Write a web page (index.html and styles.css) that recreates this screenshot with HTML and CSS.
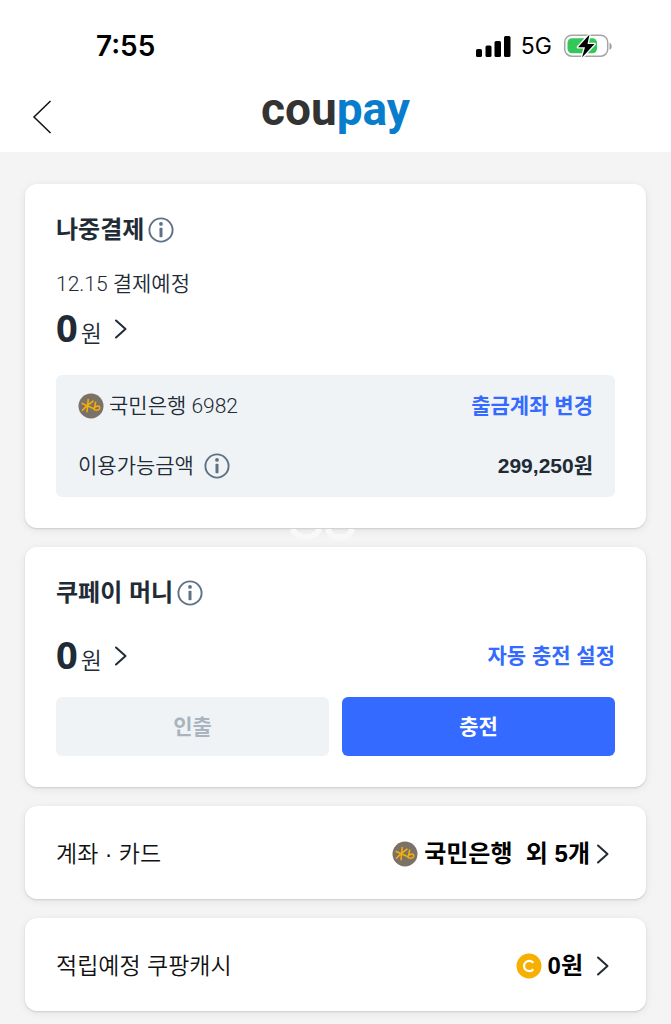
FILE: index.html
```html
<!DOCTYPE html>
<html lang="ko">
<head>
<meta charset="utf-8">
<meta name="viewport" content="width=device-width, initial-scale=1">
<title>coupay</title>
<link rel="stylesheet" href="styles.css">
</head>
<body>
<svg class="defs" aria-hidden="true">
  <symbol id="info" viewBox="0 0 26 26">
    <circle cx="13" cy="13" r="11.6" fill="none" stroke="#5f7285" stroke-width="1.9"/>
    <circle cx="13" cy="6.9" r="1.9" fill="#5f7285"/>
    <rect x="11.5" y="10.8" width="3" height="9.4" rx="0.8" fill="#5f7285"/>
  </symbol>
  <symbol id="chevron" viewBox="0 0 14 22">
    <path d="M2 2.5 11.5 11 2 19.5" fill="none" stroke="#212b36" stroke-width="2" stroke-linecap="round" stroke-linejoin="round"/>
  </symbol>
  <symbol id="bank" viewBox="0 0 26 26">
    <circle cx="13" cy="13" r="12.5" fill="#7c7166"/>
    <path d="M10.2 6.6 9 18.7M4.2 10.4 16 15.8M15 8.2C11 10.6 8 13.6 4.4 17.2M17.6 9.2 16.2 16.6C18.4 17.8 22 17 21.8 14.6 21.5 12.4 18.4 12.9 16.8 14.4" fill="none" stroke="#f0ae0c" stroke-width="1.6" stroke-linecap="round"/>
  </symbol>
</svg>

<header class="top">
  <div class="status">
    <span class="time">7:55</span>
    <div class="signals">
      <svg width="36" height="24" viewBox="0 0 36 24" aria-label="signal">
        <rect x="1" y="15" width="6" height="8" rx="1.6"/>
        <rect x="10.5" y="11.5" width="6" height="11.5" rx="1.6"/>
        <rect x="19.5" y="7" width="6.5" height="16" rx="1.6"/>
        <rect x="29" y="2" width="6.5" height="21" rx="1.6"/>
      </svg>
      <span class="network">5G</span>
      <svg width="50" height="26" viewBox="0 0 50 26" aria-label="battery">
        <rect x="1.7" y="2.2" width="43" height="21" rx="7" fill="#fff" stroke="#a5a5a5" stroke-width="1.5"/>
        <rect x="4.5" y="5.2" width="29.5" height="15" rx="4.5" fill="#34c759"/>
        <path d="M46.5 9.700c3 1 3 6 0 7z" fill="#a0a0a0"/>
        <path d="M26.500 1.500 15 14.200h7L19 24.500 31.500 11h-7z" fill="#000" stroke="#fff" stroke-width="2.600" stroke-linejoin="round" paint-order="stroke"/>
      </svg>
    </div>
  </div>
  <nav class="bar">
    <button class="back" type="button" aria-label="뒤로">
      <svg width="20" height="34" viewBox="0 0 20 34"><path d="M18.500 1 2 17 18.500 33" fill="none" stroke="#111" stroke-width="1.500"/></svg>
    </button>
    <h1 class="logo">cou<span>pay</span></h1>
  </nav>
</header>

<main class="cards">
  <section class="card later">
    <h2 class="title">나중결제 <button type="button" aria-label="나중결제 안내"><svg class="icon"><use href="#info"/></svg></button></h2>
    <p class="due">12.15 결제예정</p>
    <a class="amount" href="#later"><b>0</b><span>원</span><svg class="chev"><use href="#chevron"/></svg></a>
    <div class="panel">
      <div class="line">
        <span class="bank"><svg class="icon"><use href="#bank"/></svg>국민은행 6982</span>
        <a class="link" href="#account">출금계좌 변경</a>
      </div>
      <div class="line">
        <span class="limit">이용가능금액 <button type="button" aria-label="이용가능금액 안내"><svg class="icon"><use href="#info"/></svg></button></span>
        <strong>299,250원</strong>
      </div>
    </div>
    <svg class="ghost" width="66" height="12" viewBox="0 0 66 12" aria-hidden="true">
      <path d="M3 0C5 11 27 11 29 0M38 0C40 11 60 11 62 0" fill="none" stroke="#f8f8f8" stroke-width="6"/>
    </svg>
  </section>

  <section class="card money">
    <h2 class="title">쿠페이 머니 <button type="button" aria-label="쿠페이 머니 안내"><svg class="icon"><use href="#info"/></svg></button></h2>
    <div class="line balance">
      <a class="amount" href="#money"><b>0</b><span>원</span><svg class="chev"><use href="#chevron"/></svg></a>
      <a class="link" href="#auto">자동 충전 설정</a>
    </div>
    <div class="actions">
      <button class="btn" type="button" disabled>인출</button>
      <button class="btn primary" type="button">충전</button>
    </div>
  </section>

  <a class="card row" href="#cards">
    <span>계좌 · 카드</span>
    <span class="value"><svg class="icon"><use href="#bank"/></svg><b>국민은행&nbsp; 외 5개</b><svg class="chev"><use href="#chevron"/></svg></span>
  </a>

  <a class="card row" href="#cash">
    <span>적립예정 쿠팡캐시</span>
    <span class="value cash">
      <svg class="icon" viewBox="0 0 26 26"><circle cx="13" cy="13" r="12.500" fill="#f7b000"/><path d="M17.300 9.700a5.200 5.200 0 1 0 0 6.600" fill="none" stroke="#fff" stroke-width="2.200"/></svg><b>0원</b><svg class="chev"><use href="#chevron"/></svg></span>
  </a>
</main>
</body>
</html>
```

FILE: styles.css
```css
* {
  box-sizing: border-box;
}

body {
  margin: 0;
  background: #f4f4f4;
  color: #212b36;
  font-family: "Liberation Sans", "Noto Sans CJK KR", sans-serif;
  font-size: 21px;
  line-height: 30px;
}

h1, h2, p {
  margin: 0;
}

a {
  color: inherit;
  text-decoration: none;
}

button {
  padding: 0;
  border: 0;
  background: none;
  font: inherit;
  cursor: pointer;
}

svg {
  display: block;
  flex: none;
}

.defs {
  position: absolute;
  width: 0;
  height: 0;
}

.icon {
  width: 26px;
  height: 26px;
}

.chev {
  width: 14px;
  height: 22px;
}

.top {
  padding: 30px 25px 10px;
  background: #fff;
}

.status {
  display: flex;
  justify-content: space-between;
  align-items: center;
  height: 32px;
  padding: 0 33px 0 71px;
  color: #000;
}

.time {
  font: 600 28px/32px Inter, sans-serif;
}

.signals {
  display: flex;
  align-items: center;
}

.network {
  margin: 0 11px 0 10px;
  font: 400 23px/32px Inter, sans-serif;
}

.bar {
  display: grid;
  grid-template-columns: 34px 1fr 34px;
  align-items: end;
  height: 80px;
  padding-bottom: 8px;
}

.back {
  padding-left: 7px;
}

.logo {
  color: #333;
  font: 700 46px/50px Roboto, sans-serif;
  text-align: center;
}

.logo span {
  color: #087dcb;
}

.cards {
  display: flex;
  flex-direction: column;
  gap: 19px;
  padding: 32px 25px 12px;
}

.card {
  position: relative;
  padding: 30px 31px 31px;
  border-radius: 12px;
  background: #fff;
  box-shadow: 0 1px 2px rgba(0, 0, 0, 0.13), 0 2px 10px rgba(0, 0, 0, 0.07);
}

.title {
  display: flex;
  align-items: center;
  gap: 4px;
  font-size: 24px;
  font-weight: 700;
  line-height: 32px;
}

.title button, .limit button {
  line-height: 0;
}

.due {
  margin: 23px 0 10px;
}

.due, .panel {
  font-family: Roboto, "Noto Sans CJK KR", sans-serif;
  font-weight: 350;
}

.amount {
  display: inline-flex;
  align-items: baseline;
  height: 40px;
  font-size: 23px;
  font-weight: 350;
  vertical-align: top;
}

.amount b {
  margin-right: 3px;
  font: 700 38px/36px "Noto Sans", sans-serif;
}

.amount .chev {
  align-self: center;
  margin-left: 12px;
}

.panel {
  display: grid;
  gap: 30px;
  margin-top: 26px;
  padding: 16px 22px;
  border-radius: 6px;
  background: #eff3f6;
}

.line {
  display: flex;
  justify-content: space-between;
  align-items: center;
}

.bank, .limit {
  display: flex;
  align-items: center;
  gap: 5px;
}

.limit {
  gap: 10px;
}

.line strong, .link {
  font-family: "Liberation Sans", "Noto Sans CJK KR", sans-serif;
  font-weight: 700;
}

.link {
  color: #346aff;
}

.ghost {
  position: absolute;
  left: 265px;
  bottom: -13px;
}

.balance {
  margin-top: 27px;
}

.actions {
  display: grid;
  grid-template-columns: 1fr 1fr;
  gap: 13px;
  margin-top: 21px;
}

.btn {
  height: 59px;
  border-radius: 6px;
  background: #eff3f6;
  color: #a9b4bf;
  font-weight: 700;
}

.primary {
  background: #346aff;
  color: #fff;
}

.row {
  display: flex;
  justify-content: space-between;
  align-items: center;
  min-height: 93px;
  padding-top: 32px;
  padding-bottom: 30px;
  color: #111;
  font-size: 23px;
  font-weight: 350;
}

.value {
  display: flex;
  align-items: center;
  gap: 6px;
  padding-right: 5px;
  color: #000;
  font-size: 24px;
}

.value b {
  font-weight: 700;
}

.cash .chev {
  margin-left: 7px;
}
```
